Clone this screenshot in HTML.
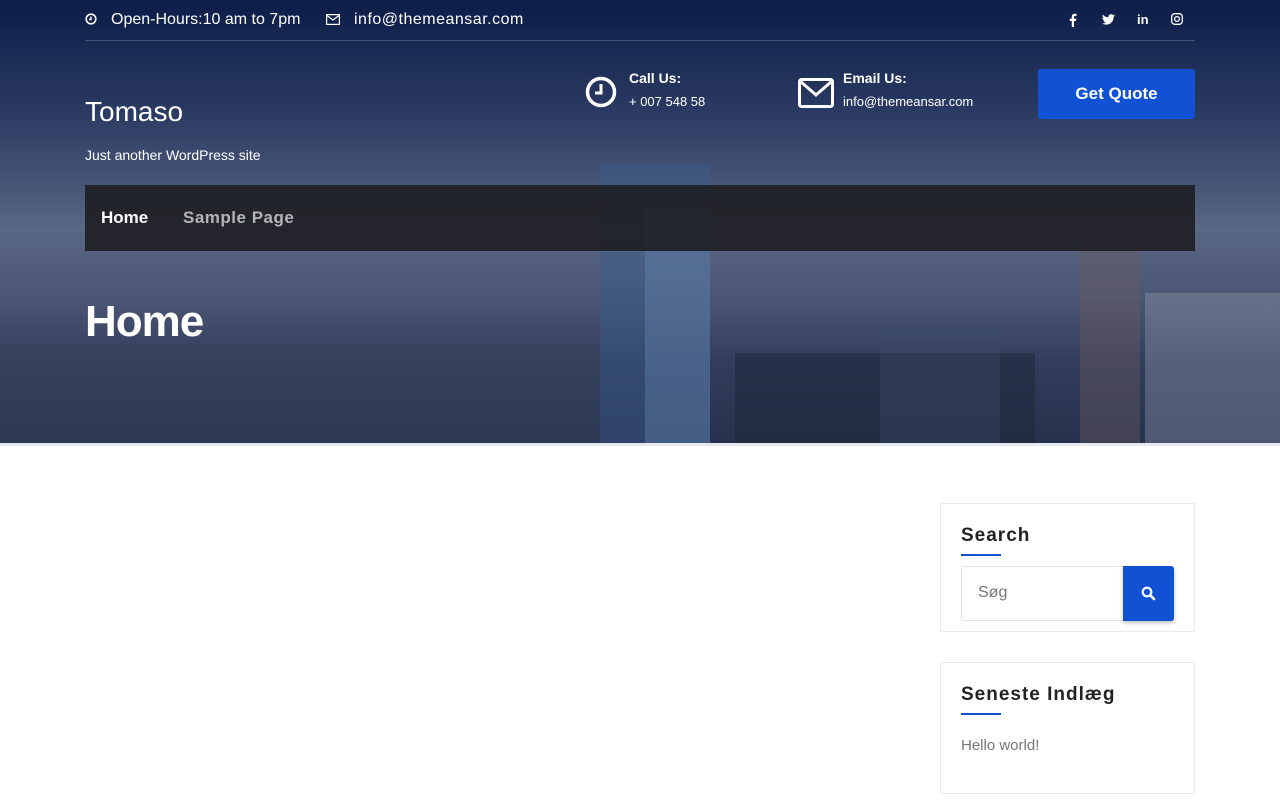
<!DOCTYPE html>
<html><head><meta charset="utf-8"><style>
*{margin:0;padding:0;box-sizing:border-box}
body{width:1280px;height:800px;overflow:hidden;font-family:"Liberation Sans",sans-serif;background:#fff;position:relative}
.hero{position:absolute;left:0;top:0;width:1280px;height:443px;background:linear-gradient(180deg,#0b1d48 0%,#2a3a62 25%,#5a6783 52%,#4a5573 68%,#323d5b 82%,#26314d 100%);overflow:hidden}
.b{position:absolute;bottom:0}
.t{position:absolute;color:#fff;white-space:nowrap}
</style></head><body>
<div class="hero">
 <div class="b" style="left:600px;width:110px;height:280px;background:#3a5a8a;opacity:.45"></div>
 <div class="b" style="left:645px;width:65px;height:235px;background:#6e8fb8;opacity:.35"></div>
 <div class="b" style="left:735px;width:300px;height:90px;background:#1e2638;opacity:.55"></div>
 <div class="b" style="left:1080px;width:60px;height:200px;background:#6b5a60;opacity:.4"></div>
 <div class="b" style="left:1145px;width:135px;height:150px;background:#9aa3b5;opacity:.35"></div>
 <div class="b" style="left:880px;width:120px;height:120px;background:#3b4a66;opacity:.4"></div>
 <div class="b" style="left:0;width:600px;height:100px;background:#3a4560;opacity:.4"></div>
</div>
<div style="position:absolute;left:0;top:443px;width:1280px;height:3px;background:#e6e8ee"></div>
<!-- top bar -->
<svg style="position:absolute;left:85px;top:13px" width="12" height="12" viewBox="0 0 12 12"><circle cx="6" cy="6" r="4.8" fill="none" stroke="#fff" stroke-width="1.6"/><path d="M6 3.5V6.5H4" fill="none" stroke="#fff" stroke-width="1.4"/></svg>
<div class="t" style="left:111px;top:11px;font-size:16px">Open-Hours:10 am to 7pm</div>
<svg style="position:absolute;left:326px;top:14px" width="14" height="11" viewBox="0 0 14 11"><rect x=".6" y=".6" width="12.8" height="9.8" fill="none" stroke="#fff" stroke-width="1.2"/><path d="M1 1.5L7 6 13 1.5" fill="none" stroke="#fff" stroke-width="1.2"/></svg>
<div class="t" style="left:354px;top:11px;font-size:16px;letter-spacing:.5px">info@themeansar.com</div>
<svg style="position:absolute;left:1069px;top:13px" width="8" height="14" viewBox="0 0 8 14"><path d="M5 14V8H7L7.4 5.6H5V4.2C5 3.5 5.3 3 6.2 3H7.5V.9C7 .8 6.3.7 5.6.7 3.9.7 2.8 1.7 2.8 3.6V5.6H.8V8H2.8V14Z" fill="#fff"/></svg>
<svg style="position:absolute;left:1102px;top:14px" width="13" height="11" viewBox="0 0 24 20"><path d="M24 2.4a10 10 0 01-2.8.8A5 5 0 0023.3.5a10 10 0 01-3.1 1.2A4.9 4.9 0 0011.8 6 14 14 0 011.7.9a4.9 4.9 0 001.5 6.6A4.9 4.9 0 01.9 6.9a4.9 4.9 0 003.9 4.9 5 5 0 01-2.2.1 4.9 4.9 0 004.6 3.4A9.9 9.9 0 010 17.3 14 14 0 007.5 19.5c9.1 0 14-7.5 14-14v-.6A10 10 0 0024 2.4z" fill="#fff"/></svg>
<div class="t" style="left:1137px;top:12px;font-size:13px;font-weight:bold">in</div>
<svg style="position:absolute;left:1171px;top:13px" width="12" height="12" viewBox="0 0 12 12"><rect x=".7" y=".7" width="10.6" height="10.6" rx="3" fill="none" stroke="#fff" stroke-width="1.3"/><circle cx="6" cy="6" r="2.4" fill="none" stroke="#fff" stroke-width="1.3"/></svg>
<div style="position:absolute;left:85px;top:40px;width:1110px;height:1px;background:rgba(255,255,255,.2)"></div>
<!-- header -->
<div class="t" style="left:85px;top:96px;font-size:28px">Tomaso</div>
<div class="t" style="left:85px;top:147px;font-size:14px">Just another WordPress site</div>
<svg style="position:absolute;left:585px;top:76px" width="32" height="32" viewBox="0 0 32 32"><circle cx="16" cy="16" r="13.5" fill="none" stroke="#fff" stroke-width="3.5"/><path d="M16 8V17H10" fill="none" stroke="#fff" stroke-width="3"/></svg>
<div class="t" style="left:629px;top:70px;font-size:14px;font-weight:bold">Call Us:</div>
<div class="t" style="left:629px;top:94px;font-size:13px">+ 007 548 58</div>
<svg style="position:absolute;left:798px;top:78px" width="36" height="30" viewBox="0 0 36 30"><rect x="1.5" y="1.5" width="33" height="27" rx="2" fill="none" stroke="#fff" stroke-width="3"/><path d="M2 3L18 17 34 3" fill="none" stroke="#fff" stroke-width="3"/></svg>
<div class="t" style="left:843px;top:70px;font-size:14px;font-weight:bold">Email Us:</div>
<div class="t" style="left:843px;top:94px;font-size:13px">info@themeansar.com</div>
<div style="position:absolute;left:1038px;top:69px;width:157px;height:50px;background:#1151d3;border-radius:3px;color:#fff;font-weight:bold;font-size:17px;text-align:center;line-height:50px">Get Quote</div>
<!-- nav -->
<div style="position:absolute;left:85px;top:185px;width:1110px;height:66px;background:rgba(28,28,32,.88)"></div>
<div class="t" style="left:101px;top:208px;font-size:17px;font-weight:bold">Home</div>
<div class="t" style="left:183px;top:208px;font-size:17px;font-weight:bold;color:#b4b4b8;letter-spacing:.5px">Sample Page</div>
<div class="t" style="left:85px;top:297px;font-size:44px;font-weight:bold;letter-spacing:-1px">Home</div>
<!-- sidebar -->
<div style="position:absolute;left:940px;top:503px;width:255px;height:129px;border:1px solid #ebebeb"></div>
<div class="t" style="left:961px;top:525px;font-size:19px;font-weight:bold;color:#222;letter-spacing:1px">Search</div>
<div style="position:absolute;left:961px;top:554px;width:40px;height:2px;background:#1151d3"></div>
<div style="position:absolute;left:961px;top:566px;width:165px;height:55px;border:1px solid #e2e2e2;border-radius:3px 0 0 3px"></div>
<div class="t" style="left:978px;top:584px;font-size:16px;color:#777">Søg</div>
<div style="position:absolute;left:1123px;top:566px;width:51px;height:55px;background:#1151d3;border-radius:0 3px 3px 0;box-shadow:0 2px 4px rgba(0,0,0,.25)"></div>
<svg style="position:absolute;left:1141px;top:586px" width="15" height="15" viewBox="0 0 15 15"><circle cx="6" cy="6" r="4.3" fill="none" stroke="#fff" stroke-width="2.2"/><path d="M9.3 9.3L13 13" stroke="#fff" stroke-width="2.6" stroke-linecap="round"/></svg>
<div style="position:absolute;left:940px;top:662px;width:255px;height:132px;border:1px solid #ebebeb"></div>
<div class="t" style="left:961px;top:684px;font-size:19px;font-weight:bold;color:#222;letter-spacing:1px">Seneste Indlæg</div>
<div style="position:absolute;left:961px;top:713px;width:40px;height:2px;background:#1151d3"></div>
<div class="t" style="left:961px;top:737px;font-size:15px;color:#777">Hello world!</div>
</body></html>
